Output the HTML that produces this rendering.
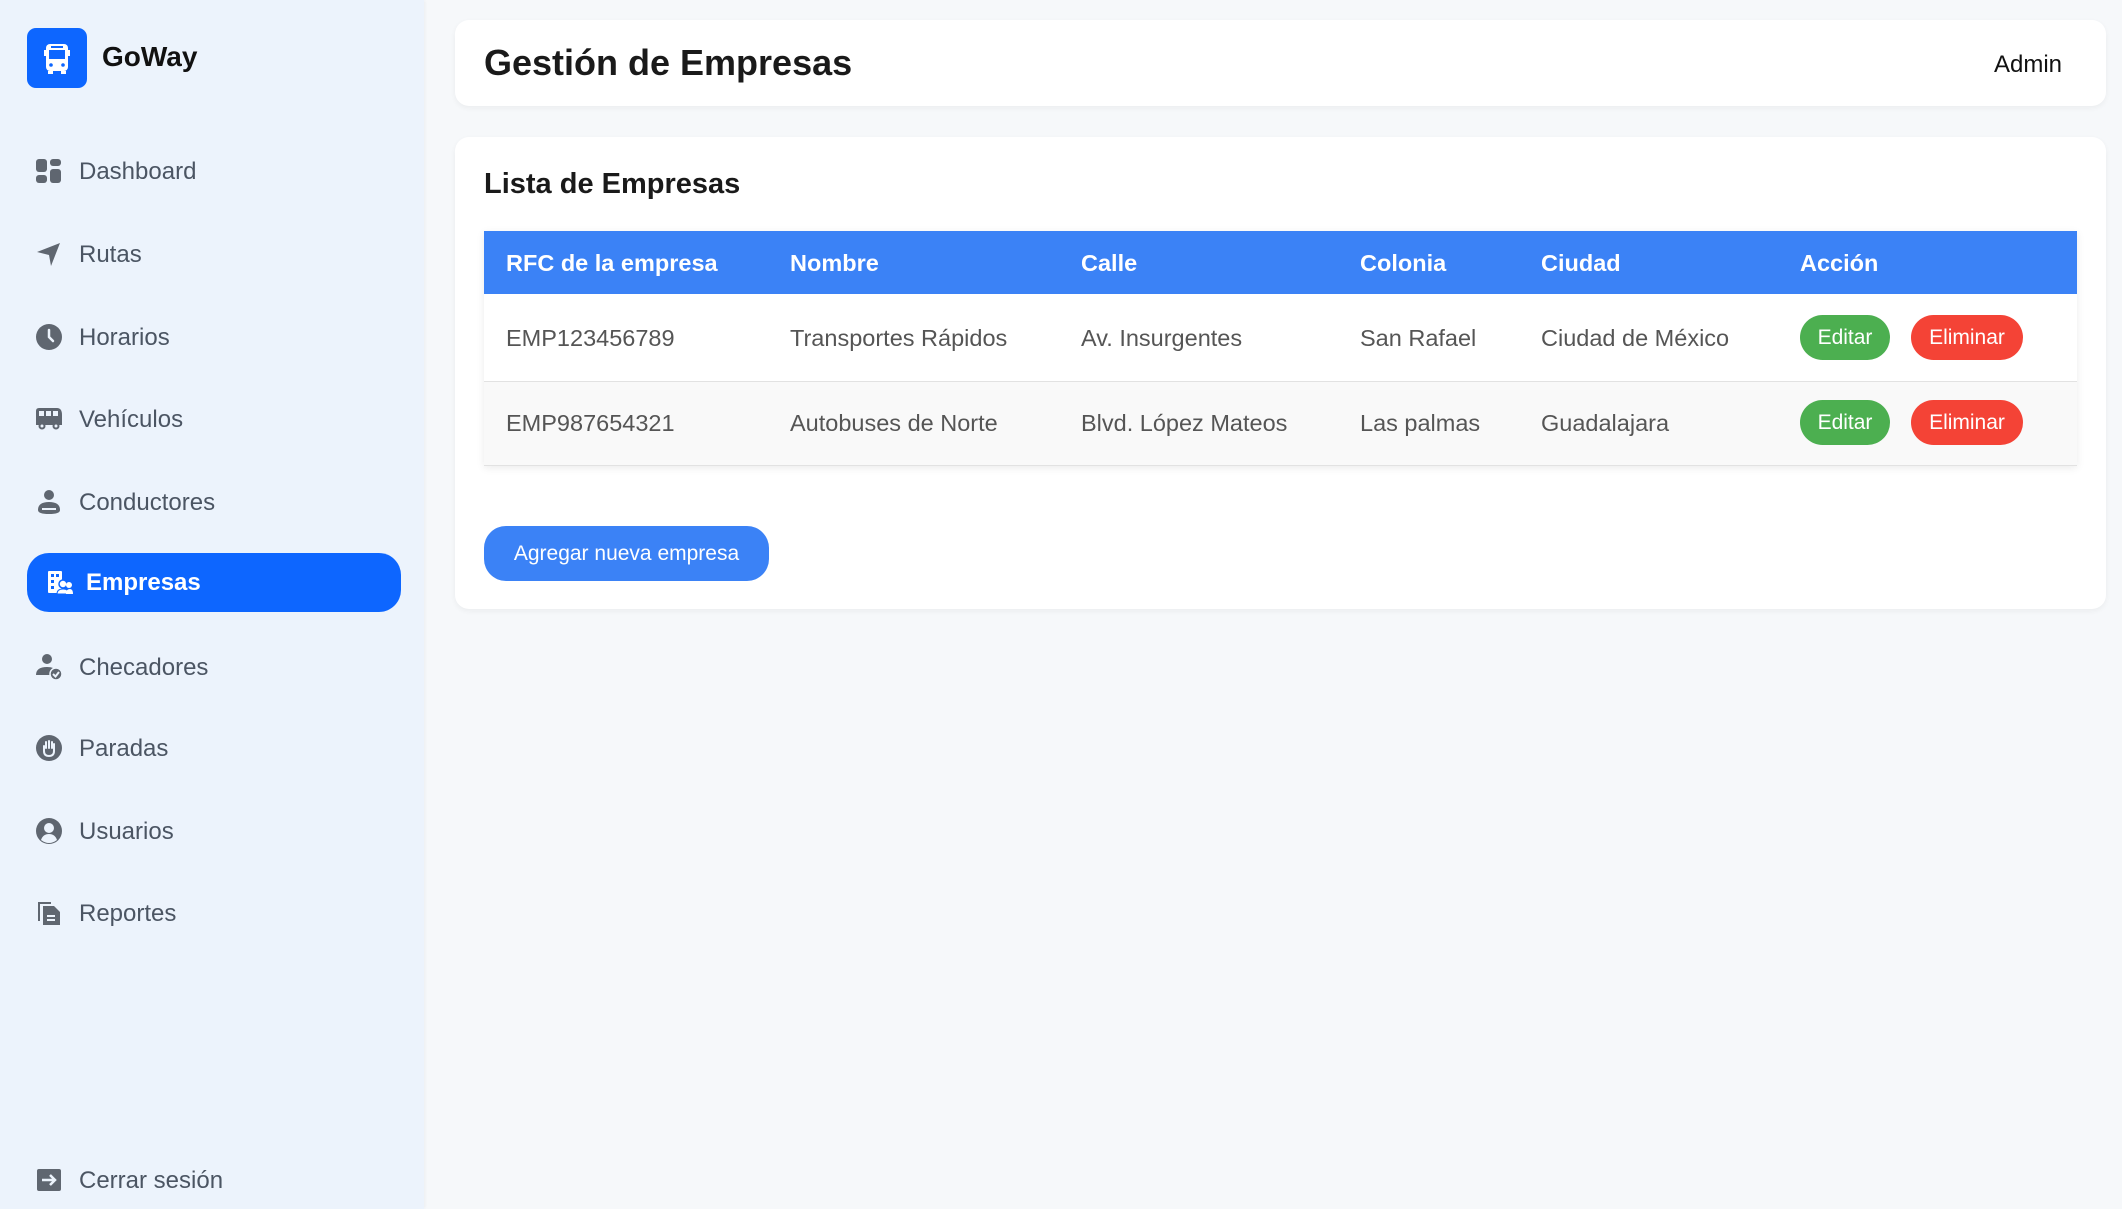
<!DOCTYPE html>
<html><head><meta charset="utf-8"><style>
*{margin:0;padding:0;box-sizing:border-box}
body{width:2122px;height:1209px;overflow:hidden;background:#F6F8FA;font-family:"Liberation Sans",Arial,sans-serif;position:relative}
.side{position:absolute;left:0;top:0;width:424px;height:1209px;background:#ECF3FC;box-shadow:1px 0 3px rgba(0,0,0,0.04)}
.logo{position:absolute;left:27px;top:28px;width:60px;height:60px;border-radius:9px;background:#0D66FF}
.brand{position:absolute;left:102px;top:41px;font-size:28px;font-weight:bold;color:#111}
.nav{position:absolute;left:79px;font-size:24px;color:#4B5563;line-height:30px}
.ic{position:absolute;left:35px;width:28px;height:28px}
.active{position:absolute;left:27px;top:553px;width:374px;height:59px;border-radius:22px;background:#0D66FF}
.card{position:absolute;left:455px;width:1651px;background:#fff;border-radius:14px;box-shadow:0 2px 6px rgba(0,0,0,0.05)}
.t{position:absolute;font-size:23.5px;color:#555;line-height:28px}
.h{position:absolute;font-size:23.5px;color:#fff;font-weight:bold;line-height:28px}
.btn{position:absolute;height:45px;border-radius:23px;color:#fff;font-size:21px;line-height:45px;text-align:center}
</style></head><body>
<div class="side">
<div class="logo"><svg width="60" height="60" viewBox="0 0 60 60"><rect x="19" y="16" width="22" height="27" rx="4" fill="#fff"/><rect x="22" y="22" width="16" height="9" fill="#0D66FF"/><rect x="24" y="18" width="12" height="2" fill="#0D66FF"/><circle cx="24" cy="37" r="1.8" fill="#0D66FF"/><circle cx="36" cy="37" r="1.8" fill="#0D66FF"/><rect x="17" y="22" width="2" height="6" fill="#fff"/><rect x="41" y="22" width="2" height="6" fill="#fff"/><rect x="21" y="43" width="5" height="3" fill="#fff"/><rect x="34" y="43" width="5" height="3" fill="#fff"/></svg></div>
<div class="brand">GoWay</div>

<svg class="ic" style="top:157px" viewBox="0 0 28 28" fill="#5F6670"><rect x="1" y="2" width="11" height="13" rx="3"/><rect x="15" y="2" width="11" height="7" rx="3"/><rect x="1" y="18" width="11" height="8" rx="3"/><rect x="15" y="12" width="11" height="14" rx="3"/></svg>
<div class="nav" style="top:157px">Dashboard</div>

<svg class="ic" style="top:240px" viewBox="0 0 28 28" fill="#5F6670"><path d="M2 12 L25 3 L16 26 L14 15 Z"/></svg>
<div class="nav" style="top:240px">Rutas</div>

<svg class="ic" style="top:323px" viewBox="0 0 28 28"><circle cx="14" cy="14" r="13" fill="#5F6670"/><path d="M14 7 V14 L18 18" stroke="#ECF3FC" stroke-width="2.5" fill="none" stroke-linecap="round"/></svg>
<div class="nav" style="top:323px">Horarios</div>

<svg class="ic" style="top:405px" viewBox="0 0 28 28" fill="#5F6670"><path d="M1 6 Q1 3 4 3 H22 Q27 3 27 10 V20 H1 Z"/><rect x="4" y="6" width="5" height="5" fill="#ECF3FC"/><rect x="11" y="6" width="5" height="5" fill="#ECF3FC"/><rect x="18" y="6" width="5" height="5" fill="#ECF3FC"/><circle cx="7" cy="21" r="3.5"/><circle cx="21" cy="21" r="3.5"/><circle cx="7" cy="21" r="1.5" fill="#ECF3FC"/><circle cx="21" cy="21" r="1.5" fill="#ECF3FC"/></svg>
<div class="nav" style="top:405px">Vehículos</div>

<svg class="ic" style="top:488px" viewBox="0 0 28 28" fill="#5F6670"><circle cx="14" cy="7" r="5"/><path d="M3 22 Q3 14 14 14 Q25 14 25 22 Q25 26 14 26 Q3 26 3 22 Z"/><path d="M7 21 H21" stroke="#ECF3FC" stroke-width="2"/></svg>
<div class="nav" style="top:488px">Conductores</div>

<div class="active"></div>
<svg class="ic" style="top:569px;left:46px" viewBox="0 0 28 28" fill="#fff"><rect x="2" y="2" width="14" height="22" rx="1"/><rect x="5" y="5" width="3" height="3" fill="#0D66FF"/><rect x="10" y="5" width="3" height="3" fill="#0D66FF"/><rect x="5" y="11" width="3" height="3" fill="#0D66FF"/><rect x="5" y="17" width="3" height="3" fill="#0D66FF"/><circle cx="17" cy="15" r="4" stroke="#0D66FF" stroke-width="1.5"/><circle cx="23" cy="16" r="3"/><path d="M11 25 Q11 20 17 20 Q23 20 23 25 Z" stroke="#0D66FF" stroke-width="1"/><path d="M20 25 Q20 20 24 20 Q27 20 27 25Z"/></svg>
<div class="nav" style="top:568px;left:86px;color:#fff;font-weight:bold">Empresas</div>

<svg class="ic" style="top:653px" viewBox="0 0 28 28" fill="#5F6670"><circle cx="12" cy="6" r="5"/><path d="M1 22 Q1 14 12 14 Q16 14 18 15 V22 Z"/><circle cx="21" cy="21" r="6" fill="#5F6670" stroke="#ECF3FC" stroke-width="1.5"/><path d="M18 21 L20.5 23.5 L24 19" stroke="#ECF3FC" stroke-width="2" fill="none"/></svg>
<div class="nav" style="top:653px">Checadores</div>

<svg class="ic" style="top:734px" viewBox="0 0 28 28"><circle cx="14" cy="14" r="13" fill="#5F6670"/><path d="M9 12 V17 Q9 22 14 22 Q19 22 19 17 V10 M11 14 V8 M14 14 V7 M17 14 V8" stroke="#ECF3FC" stroke-width="2" fill="none" stroke-linecap="round"/></svg>
<div class="nav" style="top:734px">Paradas</div>

<svg class="ic" style="top:817px" viewBox="0 0 28 28"><circle cx="14" cy="14" r="13" fill="#5F6670"/><circle cx="14" cy="11" r="5" fill="#ECF3FC"/><path d="M6 23 Q8 17 14 17 Q20 17 22 23 Q18 26 14 26 Q10 26 6 23Z" fill="#ECF3FC"/></svg>
<div class="nav" style="top:817px">Usuarios</div>

<svg class="ic" style="top:899px" viewBox="0 0 28 28" fill="#5F6670"><path d="M3 3 H16 V5 H5 V22 H3 Z"/><path d="M8 7 H19 L25 13 V26 H8 Z"/><rect x="12" y="16" width="8" height="2" fill="#ECF3FC"/><rect x="12" y="20" width="8" height="2" fill="#ECF3FC"/></svg>
<div class="nav" style="top:899px">Reportes</div>

<svg class="ic" style="top:1166px" viewBox="0 0 28 28"><rect x="2" y="3" width="24" height="22" rx="2" fill="#5F6670"/><path d="M7 14 H20 M15 9 L20 14 L15 19" stroke="#ECF3FC" stroke-width="2.5" fill="none"/></svg>
<div class="nav" style="top:1166px">Cerrar sesión</div>
</div>

<div class="card" style="top:20px;height:86px">
<div style="position:absolute;left:29px;top:22px;font-size:36px;font-weight:bold;color:#1a1a1a">Gestión de Empresas</div>
<div style="position:absolute;right:44px;top:31px;font-size:24px;color:#111">Admin</div>
</div>

<div class="card" style="top:137px;height:472px">
<div style="position:absolute;left:29px;top:31px;font-size:29px;font-weight:bold;color:#1a1a1a">Lista de Empresas</div>
<div style="position:absolute;left:29px;top:94px;width:1593px;height:235px;box-shadow:0 2px 8px rgba(0,0,0,0.08);background:#fff">
<div style="position:absolute;left:0;top:0;width:1593px;height:63px;background:#3B82F6"></div>
<div style="position:absolute;left:0;top:150px;width:1593px;height:85px;background:#F9F9F9;border-top:1px solid #E2E2E2;border-bottom:1px solid #E2E2E2"></div>
</div>
</div>
<div class="h" style="left:506px;top:249px">RFC de la empresa</div>
<div class="h" style="left:790px;top:249px">Nombre</div>
<div class="h" style="left:1081px;top:249px">Calle</div>
<div class="h" style="left:1360px;top:249px">Colonia</div>
<div class="h" style="left:1541px;top:249px">Ciudad</div>
<div class="h" style="left:1800px;top:249px">Acción</div>

<div class="t" style="left:506px;top:324px">EMP123456789</div>
<div class="t" style="left:790px;top:324px">Transportes Rápidos</div>
<div class="t" style="left:1081px;top:324px">Av. Insurgentes</div>
<div class="t" style="left:1360px;top:324px">San Rafael</div>
<div class="t" style="left:1541px;top:324px">Ciudad de México</div>
<div class="btn" style="left:1800px;top:315px;width:90px;background:#4CAF50">Editar</div>
<div class="btn" style="left:1911px;top:315px;width:112px;background:#F44336">Eliminar</div>

<div class="t" style="left:506px;top:409px">EMP987654321</div>
<div class="t" style="left:790px;top:409px">Autobuses de Norte</div>
<div class="t" style="left:1081px;top:409px">Blvd. López Mateos</div>
<div class="t" style="left:1360px;top:409px">Las palmas</div>
<div class="t" style="left:1541px;top:409px">Guadalajara</div>
<div class="btn" style="left:1800px;top:400px;width:90px;background:#4CAF50">Editar</div>
<div class="btn" style="left:1911px;top:400px;width:112px;background:#F44336">Eliminar</div>

<div class="btn" style="left:484px;top:526px;width:285px;height:55px;line-height:55px;border-radius:22px;background:#3B82F6">Agregar nueva empresa</div>
</body></html>
